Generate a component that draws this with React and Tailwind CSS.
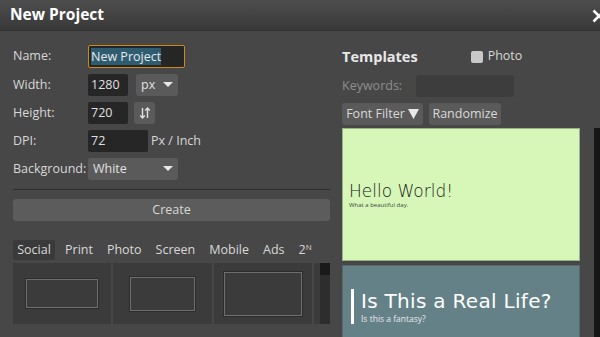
import React from "react";

const font = { fontFamily: '"Open Sans", "Noto Sans", sans-serif' };

function Label({ children, className = "" }) {
  return <div className={`w-[75px] shrink-0 text-[12.5px] text-[#d8d8d8] ${className}`}>{children}</div>;
}

function Caret() {
  return (
    <svg width="10" height="6" viewBox="0 0 10 6" className="shrink-0">
      <path d="M0 0 L10 0 L5 5 Z" fill="#e8e8e8" />
    </svg>
  );
}

function SizeCell({ w, h }) {
  return (
    <div className="flex h-full flex-1 items-center justify-center bg-[#3b3b3b]">
      <div
        className="border border-[#6e6e6e] shadow-[0_0_0_1px_#2c2c2c]"
        style={{ width: w, height: h }}
      />
    </div>
  );
}

export default function App() {
  const tabs = ["Print", "Photo", "Screen", "Mobile", "Ads"];
  return (
    <div style={font} className="h-[337px] w-[600px] overflow-hidden bg-[#474747] text-[12.5px] text-[#e0e0e0]">
      {/* header */}
      <div className="flex h-[31px] items-center justify-between border-b border-[#333] bg-gradient-to-b from-[#4d4d4d] to-[#393939] pl-[10px]">
        <span className="text-[15.5px] font-bold text-white">New Project</span>
        <svg width="8" height="14" viewBox="0 0 8 14" className="mt-[1px]">
          <path d="M1.5 1.5 L9 9 M1.5 12.5 L9 5" stroke="#fff" strokeWidth="2.6" fill="none" />
        </svg>
      </div>

      <div className="flex">
        {/* left column */}
        <div className="ml-[13px] mt-[14px] w-[317px]">
          <div className="flex flex-col gap-[6px]">
            <div className="flex h-[23px] items-center">
              <Label>Name:</Label>
              <div className="flex h-[23px] w-[97px] items-center rounded-[2px] border border-[#c98a1c] bg-[#262626] px-[2px]">
                <span className="bg-[#2e5d72] leading-[17px] text-[#e8e8e8]">New Project</span>
              </div>
            </div>
            <div className="flex h-[22px] items-center">
              <Label>Width:</Label>
              <div className="flex h-[22px] w-[40px] items-center rounded-[2px] bg-[#262626] px-[3px]">1280</div>
              <div className="ml-[8px] flex h-[22px] w-[42px] items-center justify-between rounded-[3px] bg-[#5a5a5a] px-[5px]">
                px <Caret />
              </div>
            </div>
            <div className="flex h-[22px] items-center">
              <Label>Height:</Label>
              <div className="flex h-[22px] w-[40px] items-center rounded-[2px] bg-[#262626] px-[3px]">720</div>
              <div className="ml-[6px] flex h-[22px] w-[21px] items-center justify-center rounded-[3px] bg-[#5a5a5a]">
                <svg width="12" height="12" viewBox="0 0 12 12" fill="none" stroke="#e0e0e0" strokeWidth="1.4">
                  <path d="M3.5 1 V11 M1.2 8.6 L3.5 11 L5.8 8.6" />
                  <path d="M8.5 11 V1 M6.2 3.4 L8.5 1 L10.8 3.4" />
                </svg>
              </div>
            </div>
            <div className="flex h-[22px] items-center">
              <Label>DPI:</Label>
              <div className="flex h-[22px] w-[60px] items-center rounded-[2px] bg-[#262626] px-[3px]">72</div>
              <span className="ml-[3px] text-[#d8d8d8]">Px / Inch</span>
            </div>
            <div className="flex h-[22px] items-center">
              <Label>Background:</Label>
              <div className="flex h-[22px] w-[90px] items-center justify-between rounded-[3px] bg-[#5a5a5a] px-[5px]">
                White <Caret />
              </div>
            </div>
          </div>

          <div className="mt-[9px] h-px bg-[#2c2c2c]" />
          <div className="mt-[9px] flex h-[22px] items-center justify-center rounded-[3px] bg-[#5c5c5c] text-[#d8d8d8]">
            Create
          </div>

          <div className="mt-[19px] flex h-[20px] items-center text-[#d8d8d8]">
            <div className="flex h-[20px] w-[42px] items-center justify-center rounded-[2px] bg-[#3a3a3a]">Social</div>
            <div className="ml-[10px] flex gap-[14px]">
              {tabs.map((t) => (
                <span key={t}>{t}</span>
              ))}
              <span>
                2<sup className="text-[8px]">N</sup>
              </span>
            </div>
          </div>

          <div className="mt-[3px] flex h-[61px] gap-[2px]">
            <SizeCell w={72} h={29} />
            <SizeCell w={65} h={34} />
            <SizeCell w={78} h={44} />
            <div className="flex w-[16px] bg-[#3b3b3b] pl-[6px]">
              <div className="flex-1 bg-[#2d2d2d]">
                <div className="h-[12px] bg-[#1a1a1a]" />
              </div>
            </div>
          </div>
        </div>

        {/* right column */}
        <div className="ml-[12px] mt-[14px] flex-1">
          <div className="flex h-[23px] items-center">
            <span className="text-[14.5px] font-bold text-[#e8e8e8]">Templates</span>
            <div className="ml-[53px] h-[12px] w-[12px] rounded-[2px] bg-[#c8c8c8]" />
            <span className="ml-[5px] text-[#d8d8d8]">Photo</span>
          </div>
          <div className="mt-[7px] flex h-[22px] items-center">
            <span className="w-[74px] text-[#8e8e8e]">Keywords:</span>
            <div className="h-[22px] w-[98px] rounded-[3px] bg-[#3d3d3d]" />
          </div>
          <div className="mt-[6px] flex h-[22px] gap-[6px] text-[#d8d8d8]">
            <div className="flex w-[81px] items-center justify-center gap-[3px] rounded-[3px] bg-[#5a5a5a]">
              Font Filter
              <svg width="11" height="10" viewBox="0 0 11 10">
                <path d="M0 0 H11 L5.5 10 Z" fill="#e8e8e8" />
              </svg>
            </div>
            <div className="flex w-[72px] items-center justify-center rounded-[3px] bg-[#5a5a5a]">Randomize</div>
          </div>

          <div className="mt-[3px] flex">
            <div className="w-[238px]">
              <div className="flex h-[133px] flex-col justify-center border border-[#9cb08a] bg-[#d6f7b8] pl-[6px]">
                <div className="text-[17px] leading-[20px] text-[#222]" style={{ fontFamily: '"DejaVu Sans", sans-serif', fontWeight: 300 }}>
                  Hello World!
                </div>
                <div className="text-[6px] leading-[8px] text-[#444]">What a beautiful day.</div>
              </div>
              <div className="mt-[4px] flex h-[80px] border border-[#55696e] bg-[#658188] pl-[8px] pt-[23px]">
                <div className="h-[35px] w-[3px] bg-white" />
                <div className="ml-[7px]">
                  <div className="text-[20px] leading-[24px] tracking-[0.3px] text-white" style={{ fontFamily: '"DejaVu Sans", sans-serif' }}>
                    Is This a Real Life?
                  </div>
                  <div className="text-[8.5px] text-[#e8e8e8]">Is this a fantasy?</div>
                </div>
              </div>
            </div>
            <div className="ml-[14px] h-[220px] w-[6px] bg-[#161616]" />
          </div>
        </div>
      </div>
    </div>
  );
}
